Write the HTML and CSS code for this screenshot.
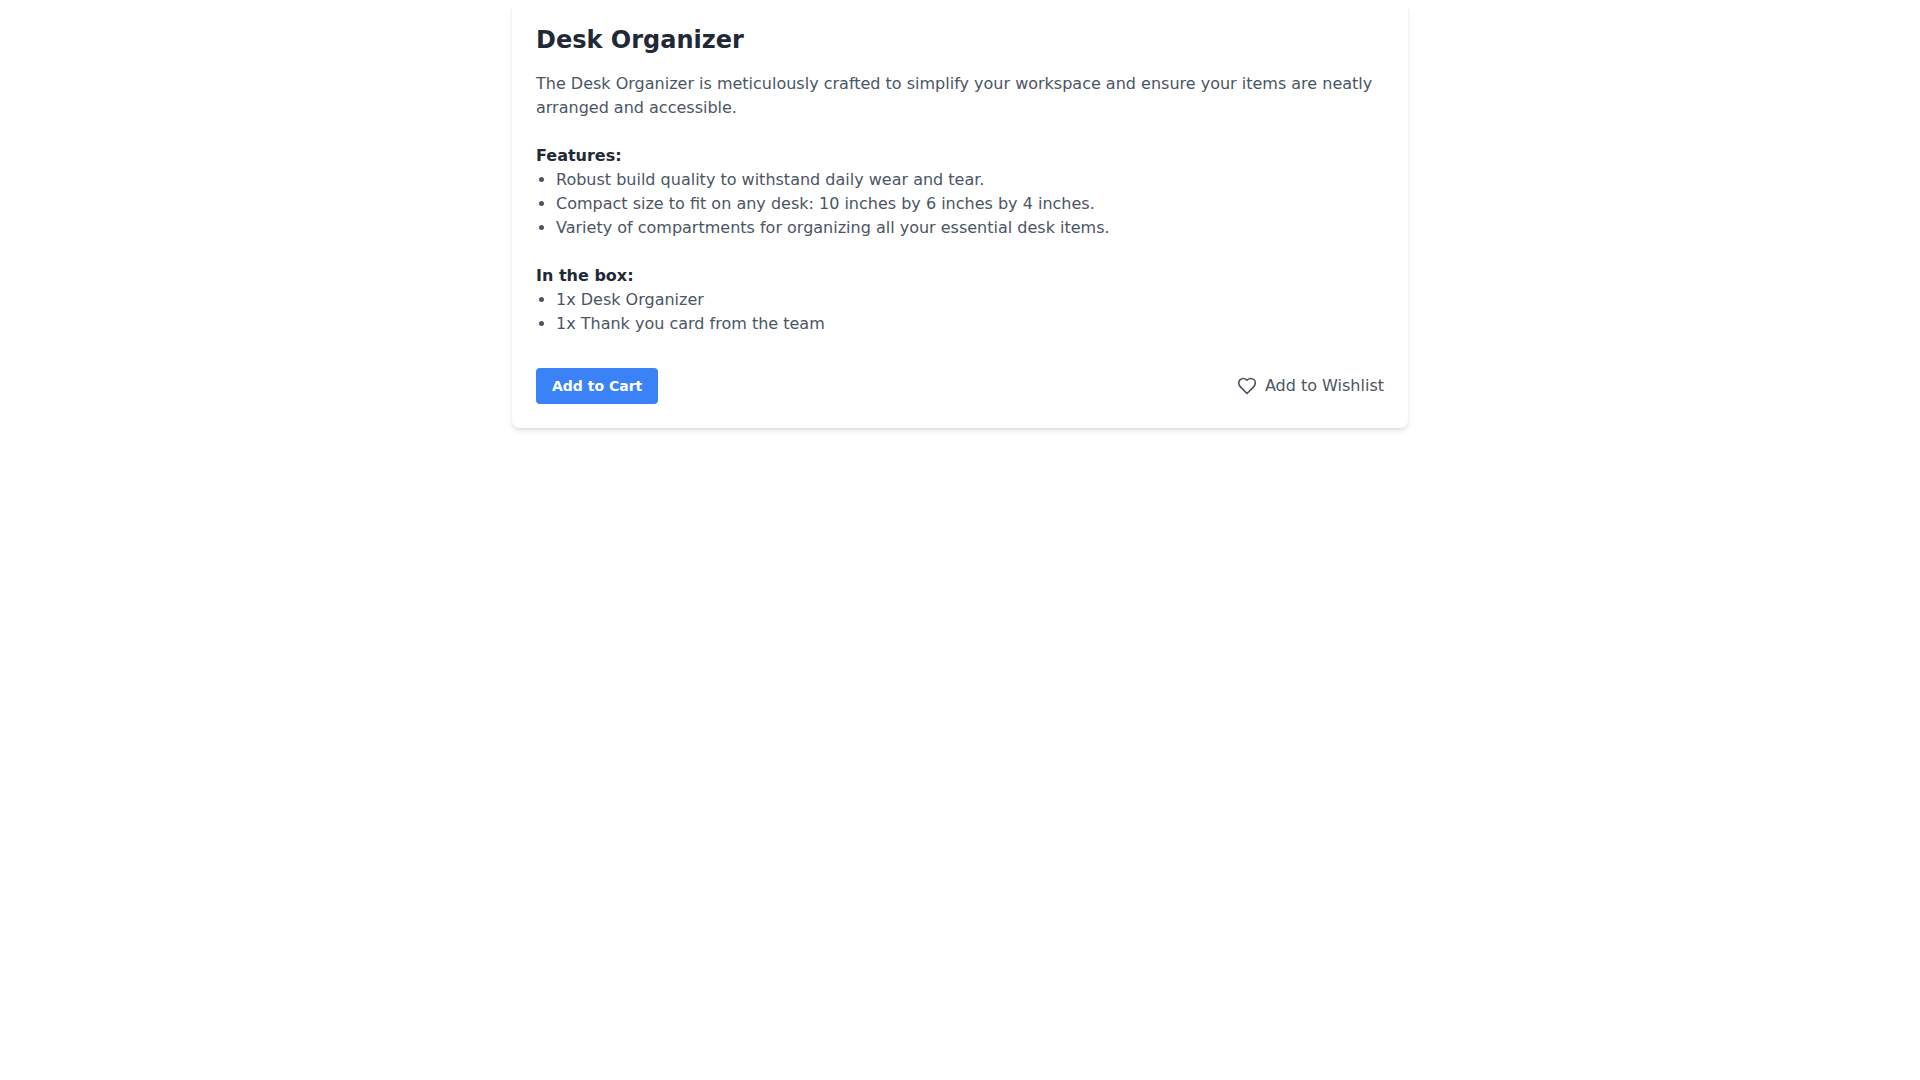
FILE: index.html
```html
<!DOCTYPE html>
<html lang="en">
<head>
<meta charset="utf-8">
<meta name="viewport" content="width=device-width, initial-scale=1">
<title>Desk Organizer</title>
<link rel="stylesheet" href="styles.css">
</head>
<body>
<main class="product-card">
  <h1 class="product-title">Desk Organizer</h1>
  <p class="description">The Desk Organizer is meticulously crafted to simplify your workspace and ensure your items are neatly arranged and accessible.</p>
  <section class="details">
    <h2 class="details-title">Features:</h2>
    <ul class="details-list">
      <li>Robust build quality to withstand daily wear and tear.</li>
      <li>Compact size to fit on any desk: 10 inches by 6 inches by 4 inches.</li>
      <li>Variety of compartments for organizing all your essential desk items.</li>
    </ul>
  </section>
  <section class="details">
    <h2 class="details-title">In the box:</h2>
    <ul class="details-list">
      <li>1x Desk Organizer</li>
      <li>1x Thank you card from the team</li>
    </ul>
  </section>
  <div class="actions">
    <button class="cart-button" type="button">Add to Cart</button>
    <button class="wishlist-button" type="button">
      <svg class="heart" viewBox="0 0 24 24" fill="none" stroke="currentColor" stroke-width="2" stroke-linecap="round" stroke-linejoin="round" aria-hidden="true"><path d="M19 14c1.49-1.46 3-3.21 3-5.5A5.5 5.5 0 0 0 16.5 3c-1.76 0-3 .5-4.5 2-1.5-1.5-2.74-2-4.5-2A5.5 5.5 0 0 0 2 8.5c0 2.3 1.5 4.05 3 5.5l7 7Z"/></svg>
      Add to Wishlist
    </button>
  </div>
</main>
</body>
</html>
```
FILE: styles.css
```css
*, *::before, *::after {
  box-sizing: border-box;
}

body {
  min-height: 100vh;
  margin: 0;
  background: #fff;
  color: #4b5563;
  font: 16px/24px "DejaVu Sans", sans-serif;
}

h1, h2, p, ul {
  margin: 0;
}

.product-card {
  max-width: 896px;
  margin: 0 auto;
  padding: 24px;
  background: #fff;
  border-radius: 8px;
  box-shadow: 0 4px 6px -1px rgba(0, 0, 0, 0.1), 0 2px 4px -2px rgba(0, 0, 0, 0.1);
}

.product-title {
  margin-bottom: 16px;
  color: #1f2937;
  font-size: 24px;
  line-height: 32px;
}

.details {
  margin-top: 24px;
}

.details-title {
  color: #1f2937;
  font-size: 16px;
  line-height: 24px;
}

.details-list {
  padding-left: 20px;
}

.actions {
  display: flex;
  justify-content: space-between;
  align-items: center;
  margin-top: 32px;
}

button {
  border: 0;
  font-family: inherit;
  cursor: pointer;
}

.cart-button {
  padding: 8px 16px;
  border-radius: 4px;
  background: #3b82f6;
  color: #fff;
  font-size: 14px;
  font-weight: 700;
  line-height: 20px;
}

.wishlist-button {
  display: flex;
  align-items: center;
  gap: 8px;
  padding: 0;
  background: transparent;
  color: #4b5563;
  font-size: 16px;
  line-height: 24px;
}

.heart {
  width: 20px;
  height: 20px;
}
```
